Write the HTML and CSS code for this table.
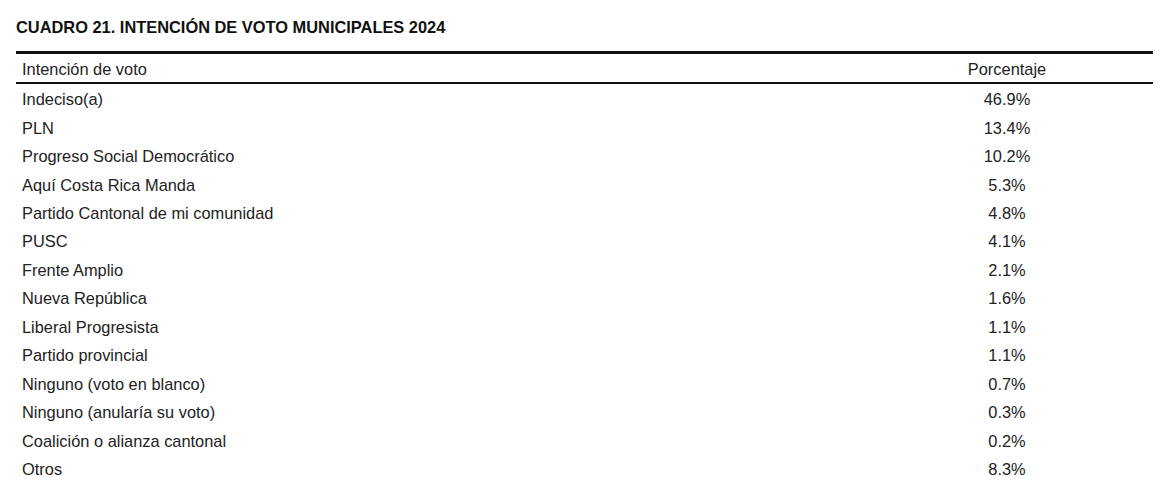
FILE: index.html
```html
<!DOCTYPE html>
<html lang="es">
<head>
<meta charset="utf-8">
<link rel="stylesheet" href="styles.css">
</head>
<body>
<div class="wrap">
  <h2 class="title">CUADRO 21. INTENCIÓN DE VOTO MUNICIPALES 2024</h2>
  <table class="tbl">
    <thead>
      <tr><th class="c-name">Intención de voto</th><th class="c-pct">Porcentaje</th></tr>
    </thead>
    <tbody>
      <tr><td class="c-name">Indeciso(a)</td><td class="c-pct">46.9%</td></tr>
      <tr><td class="c-name">PLN</td><td class="c-pct">13.4%</td></tr>
      <tr><td class="c-name">Progreso Social Democrático</td><td class="c-pct">10.2%</td></tr>
      <tr><td class="c-name">Aquí Costa Rica Manda</td><td class="c-pct">5.3%</td></tr>
      <tr><td class="c-name">Partido Cantonal de mi comunidad</td><td class="c-pct">4.8%</td></tr>
      <tr><td class="c-name">PUSC</td><td class="c-pct">4.1%</td></tr>
      <tr><td class="c-name">Frente Amplio</td><td class="c-pct">2.1%</td></tr>
      <tr><td class="c-name">Nueva República</td><td class="c-pct">1.6%</td></tr>
      <tr><td class="c-name">Liberal Progresista</td><td class="c-pct">1.1%</td></tr>
      <tr><td class="c-name">Partido provincial</td><td class="c-pct">1.1%</td></tr>
      <tr><td class="c-name">Ninguno (voto en blanco)</td><td class="c-pct">0.7%</td></tr>
      <tr><td class="c-name">Ninguno (anularía su voto)</td><td class="c-pct">0.3%</td></tr>
      <tr><td class="c-name">Coalición o alianza cantonal</td><td class="c-pct">0.2%</td></tr>
      <tr><td class="c-name">Otros</td><td class="c-pct">8.3%</td></tr>
    </tbody>
  </table>
</div>
</body>
</html>
```

FILE: styles.css
```css
html, body {
  margin: 0;
  padding: 0;
  background: #ffffff;
}
body {
  font-family: "Liberation Sans", Arial, sans-serif;
  color: #222222;
}
.wrap {
  padding: 17px 8px 0 16px;
}
.title {
  margin: 0 0 14px 0;
  font-size: 16.4px;
  font-weight: bold;
  line-height: 20px;
  color: #111111;
}
.tbl {
  width: 1137px;
  border-collapse: collapse;
  border-top: 3px solid #111111;
  font-size: 16.4px;
}
.tbl thead th {
  font-weight: normal;
  height: 26px;
  padding: 2px 0 0 0;
  border-bottom: 2px solid #111111;
}
.tbl td {
  height: 25.46px;
  padding: 3px 0 0 0;
}
.c-name {
  text-align: left;
  padding-left: 6px !important;
}
.c-pct {
  text-align: center;
  width: 292px;
}
```
